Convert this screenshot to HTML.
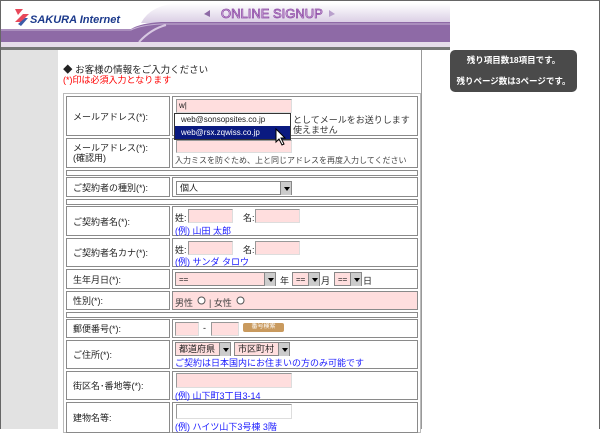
<!DOCTYPE html>
<html><head><meta charset="utf-8"><style>
*{margin:0;padding:0;box-sizing:border-box}
body{width:600px;height:429px;overflow:hidden;background:#fff;position:relative;font-family:"Liberation Sans","Noto Sans CJK JP",sans-serif;font-size:9px;color:#222}
.a{position:absolute}
.l{position:absolute;left:66px;width:104px;border:1px solid #8a8a8a;background:#fff;padding-left:6px;display:flex;align-items:center;font-size:9px}
.v{position:absolute;left:172px;width:246px;border:1px solid #8a8a8a;background:#fff;padding-left:3px}
.s{position:absolute;left:66px;width:352px;border:1px solid #8a8a8a;background:#fff}
.in{position:absolute;background:#ffdede;border:1px solid #999;border-right-color:#ddd;border-bottom-color:#ddd}
.bl{color:#1a1aff;font-size:9px;position:absolute}
.sel{position:absolute;background:#ffdede;border:1px solid #888;font-size:8px;padding-left:3px;line-height:13px}
.sel b{position:absolute;right:0;top:0;width:11px;height:13px;background:#ccc;border-left:1px solid #888}
.sel b:after{content:"";position:absolute;left:3px;top:5px;border:3px solid transparent;border-top:4px solid #000}
</style></head><body>
<div class="a" style="left:0;top:0;width:600px;height:429px;border:1px solid #666;border-bottom:none"></div>
<svg class="a" style="left:1px;top:1px" width="449" height="50">
<defs><linearGradient id="g" x1="0" y1="0" x2="0" y2="1"><stop offset="0" stop-color="#fff"/><stop offset="1" stop-color="#d9cde4"/></linearGradient></defs>
<rect width="449" height="50" fill="#fff"/>
<path d="M140 22 Q150 3 180 2 L449 2 L449 22 Z" fill="url(#g)"/>
<path d="M0 28 L130 28 Q140 22 160 21 L449 21 L449 41 L0 41 Z" fill="#8e6aa6"/>
<path d="M0 29 L130 29 Q140 24 160 23 L449 23" stroke="#c6b2d4" stroke-width="1" fill="none"/>
<path d="M138 41 Q150 28 165 24" stroke="#d8c8e2" stroke-width="2" fill="none"/>
<rect y="41" width="449" height="5" fill="#e6dcea"/>
<rect y="46" width="449" height="3" fill="#777"/>
<path d="M14 8 L22 8 L17 14 Z M22 13 L28 13 L20 21 L14 21 Z" fill="#e8485a"/>
<path d="M17 23 L24 17 L27 17 L20 25 Z" fill="#3b5aa8"/>
<text x="29" y="22" font-family="Liberation Sans" font-weight="bold" font-style="italic" font-size="11" fill="#1c3a8c">SAKURA Internet</text>
<path d="M209 9 L203 13 L209 16Z" fill="#8e6aa6"/>
<path d="M328 9 L334 13 L328 16Z" fill="#b9a0cc"/>
<text x="220" y="17" font-family="Liberation Sans" font-size="13" fill="#f2eaf6" stroke="#8e4aa6" stroke-width="0.8">ONLINE SIGNUP</text>
</svg>
<div class="a" style="left:1px;top:50px;width:57px;height:379px;background:#e2e2e2"></div>
<div class="a" style="left:421px;top:50px;width:1px;height:379px;background:#999"></div>
<div class="a" style="left:450px;top:50px;width:127px;height:42px;background:#4a4a4a;border-radius:5px;color:#fff;font-weight:bold;font-size:8.5px;text-align:center;line-height:21px">残り項目数18項目です。<br>残りページ数は3ページです。</div>
<div class="a" style="left:63px;top:62px;font-size:9.5px">◆ お客様の情報をご入力ください</div>
<div class="a" style="left:63px;top:73px;font-size:9px;color:#f00">(*)印は必須入力となります</div>
<div class="a" style="left:63px;top:93px;width:358px;height:340px;border:1px solid #bbb;background:#fff"></div>

<div class="l" style="top:96px;height:40px">メールアドレス(*):</div>
<div class="v" style="top:96px;height:40px">
 <div class="in" style="left:3px;top:2px;width:116px;height:14px;font-size:8px;line-height:12px;padding-left:2px">w|</div>
 <div class="a" style="left:120px;top:18px;font-size:9px;color:#333;line-height:10px">としてメールをお送りします<br>使えません</div>
</div>
<div class="l" style="top:138px;height:30px;line-height:10px">メールアドレス(*):<br>(確認用)</div>
<div class="v" style="top:138px;height:30px;overflow:hidden">
 <div class="in" style="left:3px;top:1px;width:116px;height:13px"></div>
 <div class="a" style="left:2px;top:16px;font-size:8px;color:#444;white-space:nowrap">入力ミスを防ぐため、上と同じアドレスを再度入力してください</div>
</div>
<div class="a" style="left:174px;top:113px;width:117px;height:27px;border:1px solid #333;background:#fff;font-size:8px">
 <div style="height:12px;line-height:12px;padding-left:6px">web@sonsopsites.co.jp</div>
 <div style="height:13px;line-height:13px;padding-left:6px;background:#0a1a80;color:#fff">web@rsx.zqwiss.co.jp</div>
</div>
<svg class="a" style="left:275px;top:128px" width="14" height="18"><path d="M1 1 L1 14 L4 11 L7 17 L9 16 L6 10 L10 10 Z" fill="#fff" stroke="#000" stroke-width="1"/></svg>

<div class="s" style="top:170px;height:6px"></div>
<div class="l" style="top:177px;height:20px">ご契約者の種別(*):</div>
<div class="v" style="top:177px;height:20px"><div class="sel" style="left:3px;top:3px;width:116px;height:14px;background:#fff;font-size:9px">個人<b></b></div></div>
<div class="s" style="top:199px;height:6px"></div>
<div class="l" style="top:206px;height:30px">ご契約者名(*):</div>
<div class="v" style="top:206px;height:30px">
 <span class="a" style="left:2px;top:4px">姓:</span><div class="in" style="left:15px;top:2px;width:45px;height:14px"></div>
 <span class="a" style="left:70px;top:4px">名:</span><div class="in" style="left:82px;top:2px;width:45px;height:14px"></div>
 <span class="bl" style="left:2px;top:17px">(例) 山田 太郎</span>
</div>
<div class="l" style="top:238px;height:29px">ご契約者名カナ(*):</div>
<div class="v" style="top:238px;height:29px">
 <span class="a" style="left:2px;top:4px">姓:</span><div class="in" style="left:15px;top:2px;width:45px;height:14px"></div>
 <span class="a" style="left:70px;top:4px">名:</span><div class="in" style="left:82px;top:2px;width:45px;height:14px"></div>
 <span class="bl" style="left:2px;top:16px">(例) サンダ タロウ</span>
</div>
<div class="l" style="top:269px;height:20px">生年月日(*):</div>
<div class="v" style="top:269px;height:20px">
 <div class="sel" style="left:2px;top:2px;width:101px;height:14px">==<b></b></div>
 <span class="a" style="left:107px;top:4px">年</span>
 <div class="sel" style="left:119px;top:2px;width:28px;height:14px">==<b></b></div>
 <span class="a" style="left:148px;top:4px">月</span>
 <div class="sel" style="left:161px;top:2px;width:28px;height:14px">==<b></b></div>
 <span class="a" style="left:190px;top:4px">日</span>
</div>
<div class="l" style="top:291px;height:19px">性別(*):</div>
<div class="v" style="top:291px;height:19px;background:#ffdede">
 <span class="a" style="left:2px;top:4px;color:#444">男性</span>
 <svg class="a" style="left:24px;top:4px" width="9" height="9"><circle cx="4.5" cy="4.5" r="3.5" fill="#fff" stroke="#555"/></svg>
 <span class="a" style="left:36px;top:4px;color:#444">| 女性</span>
 <svg class="a" style="left:63px;top:4px" width="9" height="9"><circle cx="4.5" cy="4.5" r="3.5" fill="#fff" stroke="#555"/></svg>
</div>
<div class="s" style="top:312px;height:6px"></div>
<div class="l" style="top:319px;height:19px">郵便番号(*):</div>
<div class="v" style="top:319px;height:19px">
 <div class="in" style="left:2px;top:2px;width:24px;height:14px"></div>
 <span class="a" style="left:30px;top:3px">-</span>
 <div class="in" style="left:38px;top:2px;width:28px;height:14px"></div>
 <div class="a" style="left:70px;top:3px;width:41px;height:9px;background:#c99a5e;border-radius:2px;color:#fff;font-size:6px;text-align:center;line-height:9px">番号検索</div>
</div>
<div class="l" style="top:340px;height:29px">ご住所(*):</div>
<div class="v" style="top:340px;height:29px">
 <div class="sel" style="left:2px;top:1px;width:56px;height:14px;background:#ffdede;font-size:9px">都道府県<b></b></div>
 <div class="sel" style="left:61px;top:1px;width:56px;height:14px;background:#ffdede;font-size:9px">市区町村<b></b></div>
 <span class="bl" style="left:2px;top:15px">ご契約は日本国内にお住まいの方のみ可能です</span>
</div>
<div class="l" style="top:371px;height:29px">街区名･番地等(*):</div>
<div class="v" style="top:371px;height:29px">
 <div class="in" style="left:3px;top:1px;width:116px;height:15px"></div>
 <span class="bl" style="left:2px;top:17px">(例) 山下町3丁目3-14</span>
</div>
<div class="l" style="top:402px;height:31px">建物名等:</div>
<div class="v" style="top:402px;height:31px">
 <div class="in" style="left:3px;top:1px;width:116px;height:15px;background:#fff"></div>
 <span class="bl" style="left:2px;top:17px">(例) ハイツ山下3号棟 3階</span>
</div>
</body></html>
